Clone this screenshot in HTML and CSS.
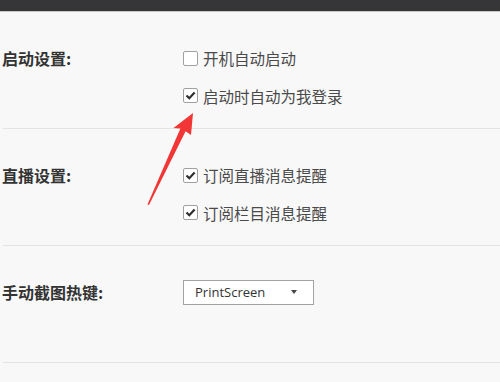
FILE: index.html
```html
<!DOCTYPE html>
<html lang="zh-CN">
<head>
<meta charset="utf-8">
<title>设置</title>
<link rel="stylesheet" href="styles.css">
</head>
<body>
<div class="topbar"></div>
<div class="settings">
  <section class="group">
    <div class="label">启动设置:</div>
    <div class="options">
      <label class="option"><span class="box"></span><span>开机自动启动</span></label>
      <label class="option"><span class="box checked"><svg viewBox="0 0 15 15" width="15" height="15"><path d="M3.5 7.5 L6.3 10.2 L11.6 4.6" fill="none" stroke="#2e2e2e" stroke-width="2.2"/></svg></span><span>启动时自动为我登录</span></label>
    </div>
  </section>
  <section class="group">
    <div class="label">直播设置:</div>
    <div class="options">
      <label class="option"><span class="box checked"><svg viewBox="0 0 15 15" width="15" height="15"><path d="M3.5 7.5 L6.3 10.2 L11.6 4.6" fill="none" stroke="#2e2e2e" stroke-width="2.2"/></svg></span><span>订阅直播消息提醒</span></label>
      <label class="option"><span class="box checked"><svg viewBox="0 0 15 15" width="15" height="15"><path d="M3.5 7.5 L6.3 10.2 L11.6 4.6" fill="none" stroke="#2e2e2e" stroke-width="2.2"/></svg></span><span>订阅栏目消息提醒</span></label>
    </div>
  </section>
  <section class="group">
    <div class="label">手动截图热键:</div>
    <div class="options">
      <div class="option">
        <div class="select"><span>PrintScreen</span><span class="caret"></span></div>
      </div>
    </div>
  </section>
</div>
<svg class="arrow" width="500" height="382" viewBox="0 0 500 382">
  <polygon points="193,113 191,135 185.6,131.3 149,205 147.5,204.5 180.4,128.6 173.5,128" fill="#f23535"/>
</svg>
</body>
</html>
```

FILE: styles.css
```css
html, body {
  margin: 0;
  padding: 0;
}
body {
  width: 500px;
  height: 382px;
  overflow: hidden;
  background: #f8f8f8;
  font-family: "Noto Sans CJK SC", "Microsoft YaHei", "Noto Sans", sans-serif;
  position: relative;
}
.topbar {
  height: 11px;
  background: #363538;
  border-bottom: 1px solid #c9c9c9;
}
.settings {
  padding-left: 3px;
}
.group {
  box-sizing: border-box;
  height: 117px;
  padding-top: 27px;
  border-bottom: 1px solid #e4e4e4;
  display: flex;
}
.label {
  width: 181px;
  height: 38px;
  display: flex;
  align-items: center;
  font-size: 16px;
  font-weight: bold;
  color: #333;
  margin-left: -1px;
}
.options {
  display: flex;
  flex-direction: column;
}
.option {
  height: 38px;
  display: flex;
  align-items: center;
  font-size: 15.5px;
  color: #4a4a4a;
}
.option:nth-child(2) {
  height: 37px;
}
.box {
  box-sizing: border-box;
  width: 15px;
  height: 15px;
  border: 1px solid #a0a0a0;
  border-radius: 2px;
  background: #fff;
  margin-right: 5px;
  position: relative;
}
.box svg {
  position: absolute;
  left: -1px;
  top: -1px;
}
.select {
  box-sizing: border-box;
  width: 131px;
  height: 25px;
  border: 1px solid #a3a3a3;
  background: #fff;
  display: flex;
  align-items: center;
  justify-content: space-between;
  padding: 0 16px 0 11px;
  font-family: "Open Sans", "Noto Sans", sans-serif;
  font-size: 13px;
  color: #333;
}
.caret {
  width: 0;
  height: 0;
  border-left: 3px solid transparent;
  border-right: 3px solid transparent;
  border-top: 4px solid #444;
}
.arrow {
  position: absolute;
  left: 0;
  top: 0;
  pointer-events: none;
}
```
